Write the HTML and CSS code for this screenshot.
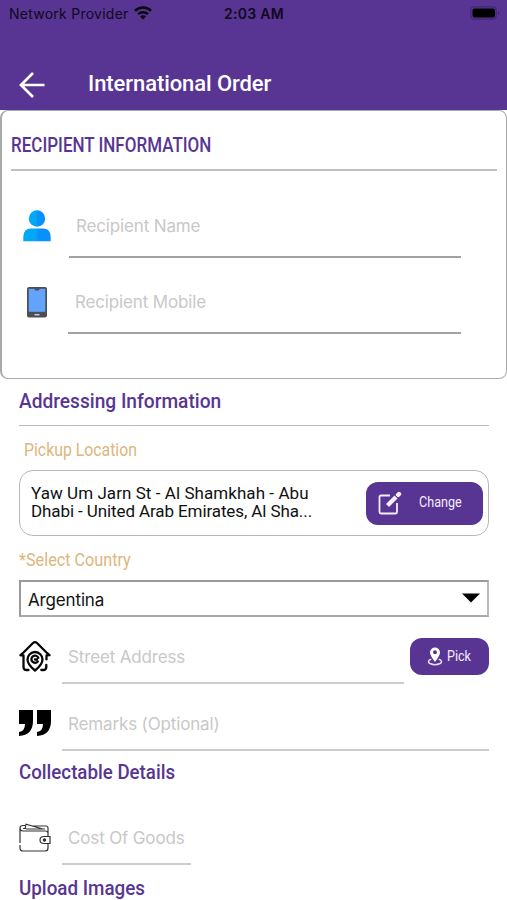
FILE: index.html
```html
<!DOCTYPE html>
<html lang="en">
<head>
<meta charset="utf-8">
<title>International Order</title>
<link rel="stylesheet" href="styles.css">
</head>
<body>
<header class="header">
  <div class="status">
    <span class="carrier">Network Provider</span>
    <svg class="wifi" width="18" height="14" viewBox="0 0 18 14"><g fill="none" stroke="#08040d" stroke-width="2.5"><path d="M1 4.8a11.4 11.4 0 0 1 16 0"/><path d="M4 8.2a7.2 7.2 0 0 1 10 0"/></g><path d="M9 13.5 6 10.5a4.2 4.2 0 0 1 6 0z" fill="#08040d"/></svg>
    <span class="clock">2:03 AM</span>
    <svg class="battery" width="30" height="14" viewBox="0 0 30 14"><rect x=".8" y=".8" width="25.4" height="12.4" rx="3.5" fill="none" stroke="#432775" stroke-width="1.2"/><rect x="2.5" y="2.5" width="22.5" height="9" rx="2" fill="#000"/><path d="M28 5v4q2-2 0-4" fill="#38205f"/></svg>
  </div>
  <div class="appbar">
    <svg class="back" width="26" height="26" viewBox="0 0 26 26" fill="none" stroke="#fff" stroke-width="2.7"><path d="M25.500 13H2M14 1 2 13l12 12"/></svg>
    <h1 class="title">International Order</h1>
  </div>
</header>
<main>
  <section class="card">
    <h2 class="card-title"><span>RECIPIENT INFORMATION</span></h2>
    <div class="field name">
      <svg width="28" height="32" viewBox="0 0 28 32"><defs><linearGradient id="p"><stop offset=".45" stop-color="#00a8f5"/><stop offset=".55" stop-color="#0890ff"/></linearGradient></defs><circle cx="14" cy="8.5" r="8.2" fill="url(#p)"/><path d="M.3 31.3V27Q.3 18.5 8 18.5h12q7.7 0 7.7 8.5v4.3z" fill="url(#p)"/></svg>
      <div class="input"><span class="ph">Recipient Name</span></div>
    </div>
    <div class="field mobile">
      <svg width="28" height="32" viewBox="0 0 28 32"><rect x="4" y="1" width="20" height="30.5" rx="2" fill="#4b4e54"/><path d="M5.7 2.800h16.600v23H5.700z" fill="#62a4fb"/><path d="M11 2.500h6l-1.300 2h-3.400z" fill="#4b4e54"/><path d="M11.500 28.700h5" stroke="#c7c9cc" stroke-width="1.5"/></svg>
      <div class="input"><span class="ph">Recipient Mobile</span></div>
    </div>
  </section>
  <section class="details">
    <h2 class="heading address-title"><span>Addressing Information</span></h2>
    <div class="label pickup"><span>Pickup Location</span></div>
    <div class="location">
      <p class="address"><span class="line1">Yaw Um Jarn St - Al Shamkhah - Abu</span><span class="line2">Dhabi - United Arab Emirates, Al Sha...</span></p>
      <button class="btn change">
        <svg width="24" height="24" viewBox="0 0 24 24" fill="none" stroke="#f5edff"><path d="M12 4.5H3q-1.500 0-1.500 1.500v15q0 1.500 1.500 1.500h14.500q1.500 0 1.500-1.500v-9" stroke-width="1.8"/><path d="M9.500 14.500 18 6" stroke-width="4.2"/><path d="m20 4 1-1" stroke-width="4.4" stroke-linecap="round"/><path d="m16.500 3.500 4 4" stroke="#583592" stroke-width=".8"/></svg>
        <span>Change</span>
      </button>
    </div>
    <div class="label country"><span>*Select Country</span></div>
    <div class="select"><span>Argentina</span><svg width="18" height="10" viewBox="0 0 18 10"><path d="M0 .5h18L9 9.500z"/></svg></div>
    <div class="row street">
      <svg class="icon" width="32" height="32" viewBox="0 0 32 32" fill="none" stroke="#080808" stroke-width="2.3" stroke-linecap="round" stroke-linejoin="round"><path d="m1.500 15.200 3-2.700L14 3q2-1.800 4 0l9.500 9.500 3 2.700-3 .2v4M1.500 15.200l3 .2V27q0 3 3 3h2M27.300 25v2q0 3-3 3h-2"/><path d="M16 30.500q-7.500-6-7.500-11a7 7 0 0 1 15 0Q23.500 24.500 16 30.500z"/><path d="M18.800 21.500a3.600 3.600 0 1 1 .5-3.800M16 19.500h2"/></svg>
      <div class="line"><span class="ph">Street Address</span></div>
      <button class="btn pick">
        <svg width="16" height="19" viewBox="0 0 16 19"><path d="M4.300 12.200C1 13 .8 15.300 3 16.500q5 2.500 10 0c2.200-1.200 2-3.500-1.300-4.300" fill="none" stroke="#e9dcfa" stroke-width="1.5"/><path fill="#fff" fill-rule="evenodd" d="M8 15Q3 8.500 3 5.500a5 5 0 0 1 10 0Q13 8.500 8 15zM8 7.300a2 2 0 1 0 0-4 2 2 0 0 0 0 4z"/></svg>
        <span>Pick</span>
      </button>
    </div>
    <div class="row remarks">
      <svg class="icon" width="32" height="28" viewBox="0 0 32 28"><path d="M0 1h14v11q0 14-14 15v-4q6-1 6-8H0z"/><path d="M18 1h14v11q0 14-14 15v-4q6-1 6-8h-6z"/></svg>
      <div class="line"><span class="ph">Remarks (Optional)</span></div>
    </div>
    <h2 class="heading collect"><span>Collectable Details</span></h2>
    <div class="row cost">
      <svg class="icon" width="32" height="29" viewBox="0 0 32 29" fill="none" stroke="#333" stroke-width="1.2"><path d="M27 3q2 0 2 2v8.500M29 20.500V25q0 3-3 3H4q-3 0-3-3v-3M1 20V5Q1 2.500 4 2.500h2M14 3h13M1 5q0 3 3 3h22q3 0 3 2M4 5.500h3M6 6l1-4.800L24 6M7 6h19"/><path d="M31 13.500h-6q-4 0-4 3.500t4 3.500h6z"/><circle cx="25.500" cy="17" r="1.200" fill="#333"/></svg>
      <div class="line"><span class="ph">Cost Of Goods</span></div>
    </div>
    <h2 class="heading upload"><span>Upload Images</span></h2>
  </section>
</main>
</body>
</html>
```
FILE: styles.css
```css
* { box-sizing: border-box; }
body { margin: 0; height: 900px; overflow: hidden; background: #fff; font-family: Roboto, sans-serif; }
h1, h2, p { margin: 0; }
svg { display: block; flex: none; }
span { display: inline-block; white-space: nowrap; transform-origin: left center; }
.header { height: 110px; background: #583592; }
.status { height: 26px; display: flex; align-items: center; padding: 0 7px 0 9px; font-family: Inter, sans-serif; font-size: 14px; color: #10081c; }
.carrier { width: 119px; letter-spacing: .25px; }
.wifi { margin-left: 6px; }
.clock { margin-left: 72px; font-weight: 600; letter-spacing: .3px; }
.battery { margin-left: auto; }
.appbar { height: 84px; display: flex; align-items: center; padding: 34px 0 0 19px; }
.title { margin: -2px 0 0 43px; color: #fff; font-size: 22px; font-weight: 500; line-height: 28px; letter-spacing: -.08px; }
.card { height: 269px; border: 1px solid #aaa; border-left-width: 2px; border-radius: 8px; padding: 0 9px; }
.card-title { height: 60px; border-bottom: 2px solid #bfbfbf; padding-top: 21px; line-height: 26px; font-size: 20px; font-weight: 500; color: #583592; }
.card-title span { transform: scaleX(.85); }
.field { display: flex; height: 76px; padding-left: 12px; }
.name { margin-top: 11px; }
.field svg { margin-top: 28px; }
.input { width: 392px; margin-left: 18px; border-bottom: 2px solid #a2a2a2; padding: 33px 0 0 7px; }
.mobile .input { margin-left: 17px; width: 393px; }
.ph { display: block; font-family: Inter, sans-serif; font-size: 17px; line-height: 22px; letter-spacing: -.15px; color: #c8c8c8; }
.details { padding: 0 18px 0 19px; }
.heading { font-size: 20px; line-height: 26px; font-weight: 500; color: #583592; }
.address-title { height: 47px; padding-top: 9px; border-bottom: 1px solid #bbb; }
.address-title span { transform: scaleX(.957); }
.label { color: #ddb67c; font-size: 18px; line-height: 24px; }
.pickup { padding: 12px 0 0 5px; height: 44px; }
.pickup span { transform: scaleX(.88); }
.location { height: 66px; border: 1.5px solid #b8b8b8; border-radius: 14px; display: flex; justify-content: space-between; align-items: center; padding: 0 5px 0 11px; }
.address { display: flex; flex-direction: column; align-items: flex-start; font-size: 17px; line-height: 18px; color: #111; margin-top: -3px; }
.line1 { letter-spacing: .06px; }
.line2 { letter-spacing: -.1px; }
.btn { border: 0; background: #583592; color: #f5edff; border-radius: 12px; font: 15px Roboto, sans-serif; display: flex; align-items: center; padding: 0; }
.btn span { transform: scaleX(.84); margin-top: -2px; }
.change { width: 117px; height: 43px; padding-left: 12px; gap: 17px; }
.country { height: 44px; padding-top: 12px; }
.country span { transform: scaleX(.9); }
.select { height: 37px; border: 2px solid #999; border-right-color: #bbb; border-bottom-color: #aaa; display: flex; align-items: center; justify-content: space-between; padding: 3px 7px 0 7px; font: 17px Inter, sans-serif; letter-spacing: -.15px; color: #111; }
.select svg { margin-top: -4px; }
.row { display: flex; }
.line { flex: 1; height: 100%; margin-left: 11px; padding-left: 6px; border-bottom: 2px solid #ccc; }
.street { height: 67px; }
.street .icon { margin-top: 23px; }
.street .line { padding-top: 29px; }
.pick { width: 79px; height: 37px; margin: 21px 0 0 6px; padding-left: 17px; gap: 4px; }
.remarks { height: 67px; }
.remarks .icon { margin-top: 25px; }
.remarks .line { padding-top: 29px; }
.collect { height: 34px; padding-top: 8px; }
.collect span { transform: scaleX(.935); }
.cost { height: 80px; }
.cost .icon { margin-top: 38px; }
.cost .line { flex: none; width: 129px; padding-top: 42px; }
.upload { padding-top: 10px; }
.upload span { transform: scaleX(.94); }
```
